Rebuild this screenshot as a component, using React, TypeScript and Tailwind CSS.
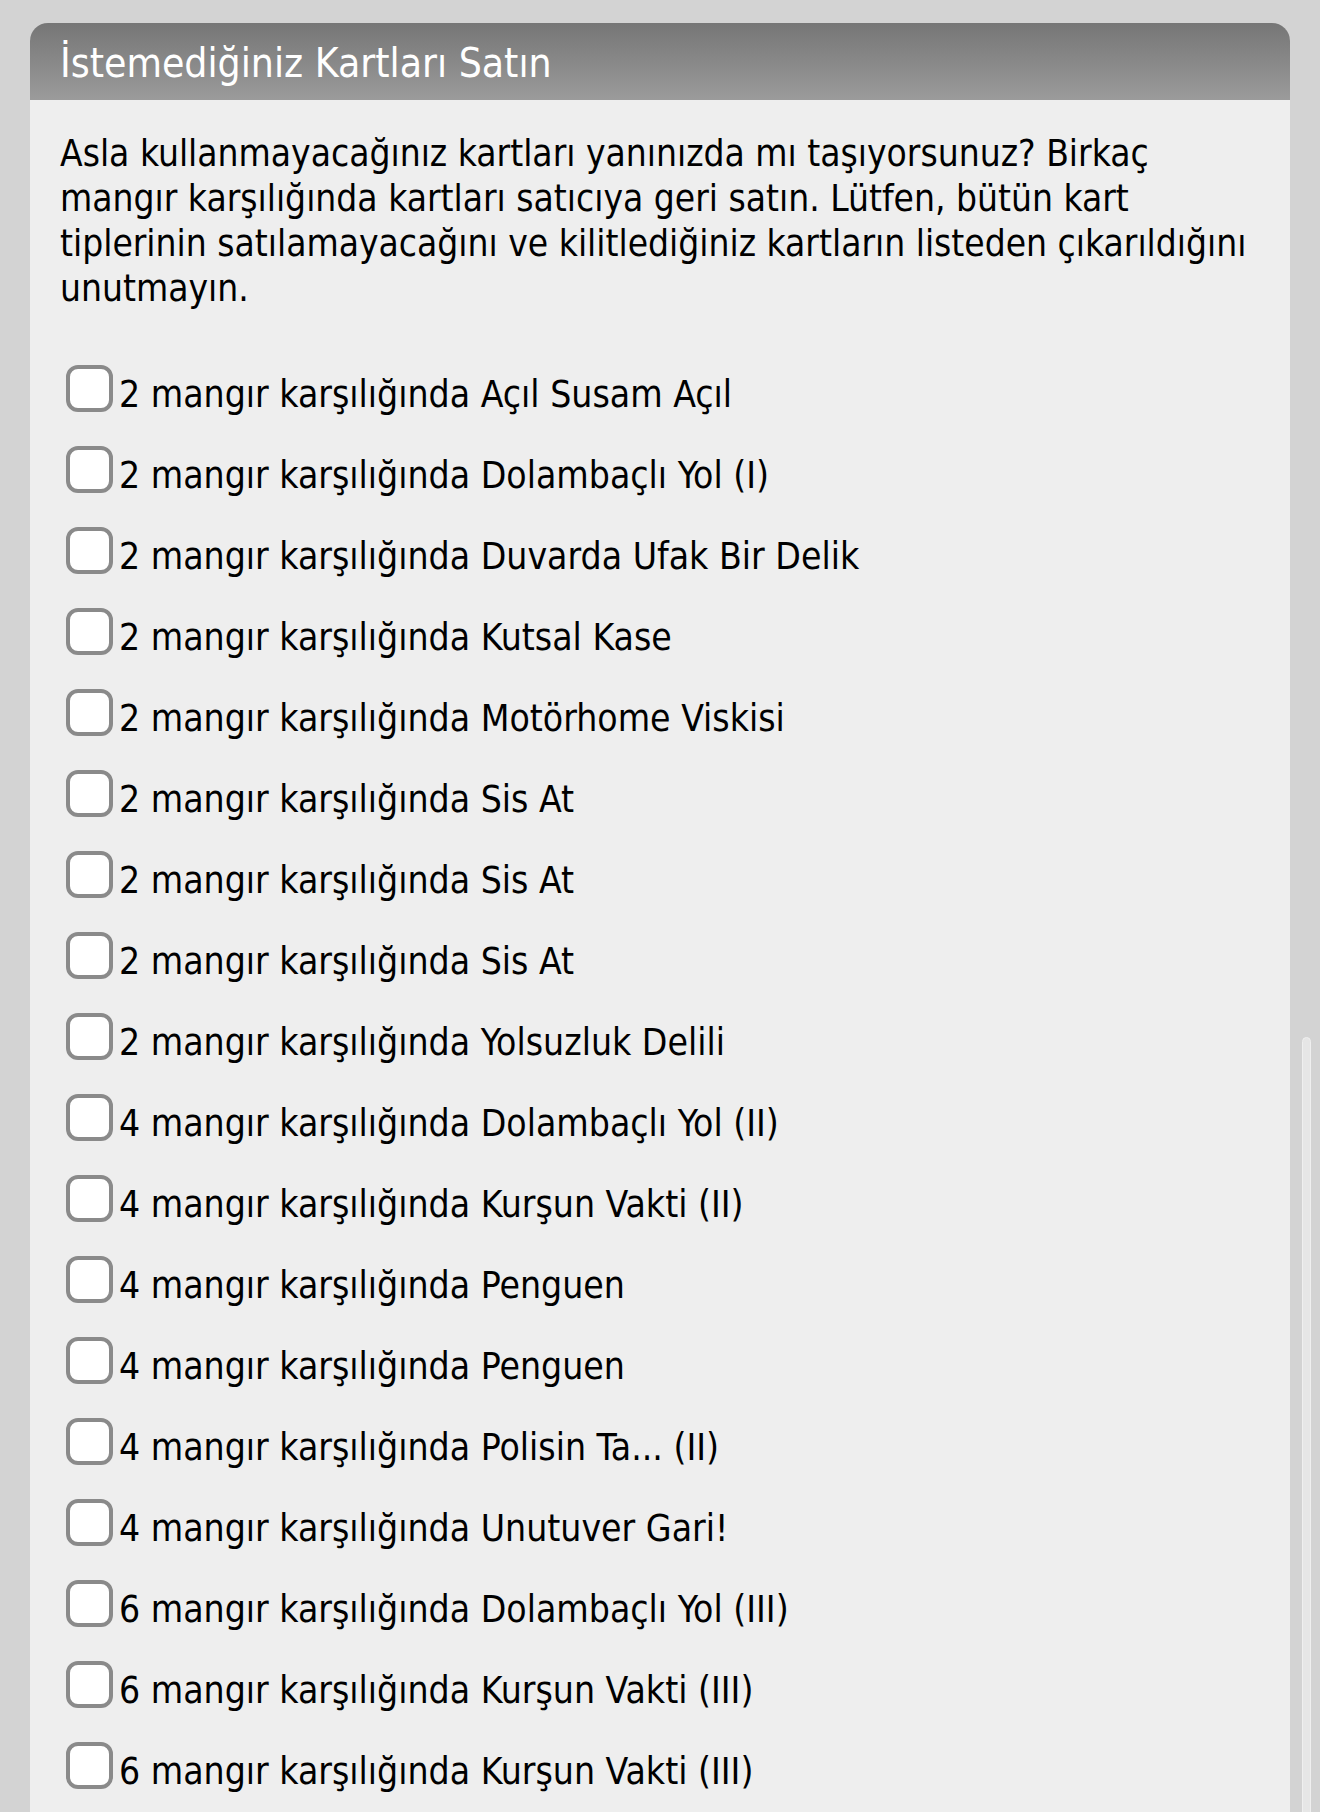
const cards = [
  "2 mangır karşılığında Açıl Susam Açıl",
  "2 mangır karşılığında Dolambaçlı Yol (I)",
  "2 mangır karşılığında Duvarda Ufak Bir Delik",
  "2 mangır karşılığında Kutsal Kase",
  "2 mangır karşılığında Motörhome Viskisi",
  "2 mangır karşılığında Sis At",
  "2 mangır karşılığında Sis At",
  "2 mangır karşılığında Sis At",
  "2 mangır karşılığında Yolsuzluk Delili",
  "4 mangır karşılığında Dolambaçlı Yol (II)",
  "4 mangır karşılığında Kurşun Vakti (II)",
  "4 mangır karşılığında Penguen",
  "4 mangır karşılığında Penguen",
  "4 mangır karşılığında Polisin Ta... (II)",
  "4 mangır karşılığında Unutuver Gari!",
  "6 mangır karşılığında Dolambaçlı Yol (III)",
  "6 mangır karşılığında Kurşun Vakti (III)",
  "6 mangır karşılığında Kurşun Vakti (III)",
];

function CardRow({ label }: { label: string }) {
  return (
    <label className="flex items-center h-[81px] pl-[6px]">
      <span className="w-[47px] h-[47px] shrink-0 rounded-[12px] border-[4px] border-[#8a8a8a] bg-white -translate-y-[6px]" />
      <span className="ml-[6px] text-[37px] text-black whitespace-nowrap font-['DejaVu_Sans_Condensed',sans-serif]">
        {label}
      </span>
    </label>
  );
}

export default function App() {
  return (
    <div className="relative h-[1812px] overflow-hidden bg-[#d3d3d3] pt-[23px] px-[30px]">
      <div className="rounded-t-[18px] overflow-hidden">
        <div className="h-[77px] flex items-center px-[30px] pt-[4px] bg-gradient-to-b from-[#767676] to-[#9b9b9b]">
          <h1 className="text-white text-[40.5px] leading-none font-['DejaVu_Sans_Condensed',sans-serif]">
            İstemediğiniz Kartları Satın
          </h1>
        </div>
        <div className="bg-[#eeeeee] px-[30px] pt-[31px] pb-[40px]">
          <p className="text-[36.8px] leading-[45px] text-black whitespace-nowrap font-['DejaVu_Sans_Condensed',sans-serif]">
            Asla kullanmayacağınız kartları yanınızda mı taşıyorsunuz? Birkaç
            <br />
            mangır karşılığında kartları satıcıya geri satın. Lütfen, bütün kart
            <br />
            tiplerinin satılamayacağını ve kilitlediğiniz kartların listeden çıkarıldığını
            <br />
            unutmayın.
          </p>
          <div className="mt-[43px] flex flex-col">
            {cards.map((c, i) => (
              <CardRow key={i} label={c} />
            ))}
          </div>
        </div>
      </div>
      {/* scroll indicator */}
      <div className="absolute left-[1302px] top-[1037px] w-[9px] h-[900px] rounded-full bg-[#e6e6e6] border border-[#efefef]" />
    </div>
  );
}
